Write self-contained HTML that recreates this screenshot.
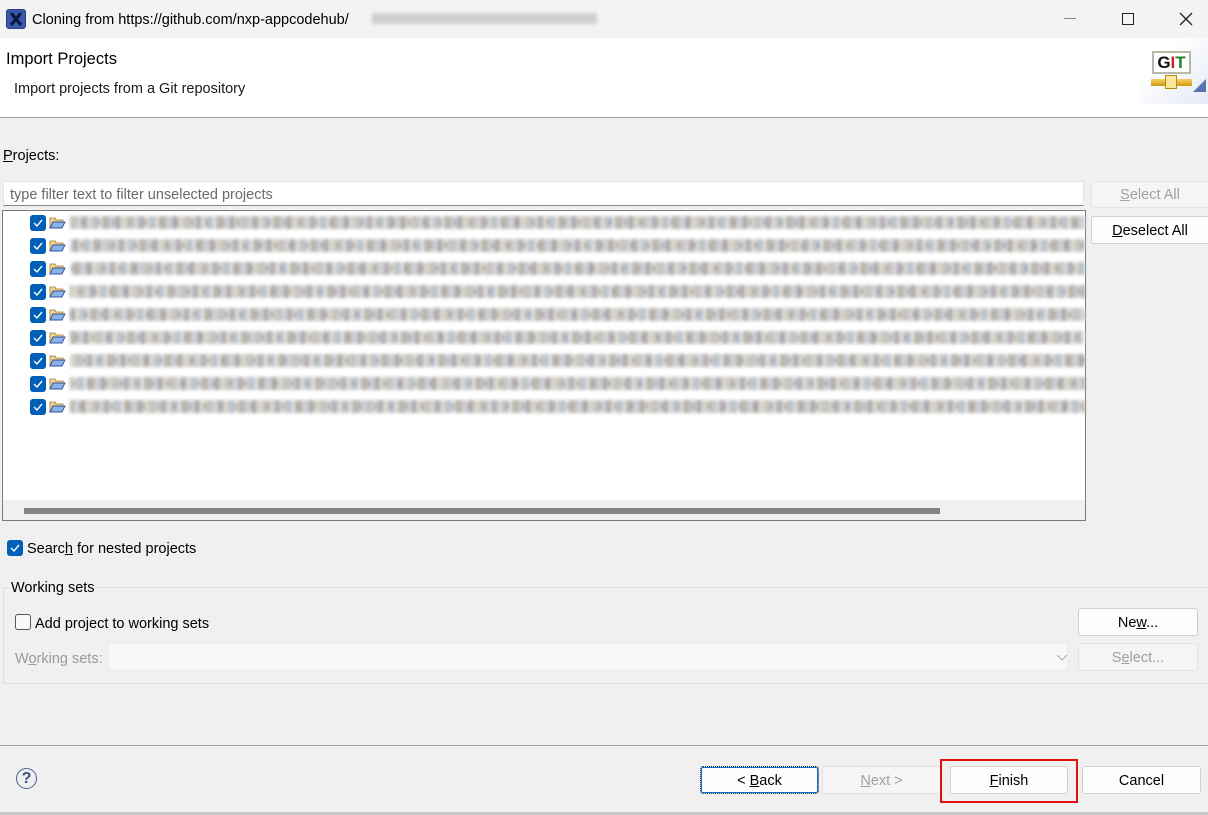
<!DOCTYPE html>
<html><head><meta charset="utf-8"><style>
*{box-sizing:border-box;margin:0;padding:0}
body{width:1208px;height:815px;overflow:hidden;background:#f0f0f0;font-family:"Liberation Sans",sans-serif;font-size:14.5px;color:#000;position:relative}
.a{position:absolute}
.btn{position:absolute;background:#fdfdfd;border:1px solid #d0d0d0;border-radius:3px;text-align:center;line-height:27px;font-size:14.5px}
.dis{color:#a0a0a0;background:#f5f5f5;border-color:#e3e3e3}
u{text-decoration:underline}
.cb{position:absolute;width:16px;height:16px;background:#005fb8;border-radius:3px}
.cb svg{position:absolute;left:2px;top:3px}
.row{position:absolute;left:30px;height:16px;width:1055px}
.blur{position:absolute;left:40px;top:1px;height:13px;width:1015px;filter:blur(1.6px);
background:repeating-linear-gradient(90deg,#c6c4c0 0 7px,#d4d4d6 7px 12px,#b0aeb4 12px 17px,#dcd9d2 17px 22px,#bcc4cc 22px 29px,#e6e6e6 29px 32px,#bab6ae 32px 39px,#cfcfd3 39px 46px,#a8a6a8 46px 50px,#d8d4cc 50px 57px)}
.blur2{position:absolute;left:40px;top:5px;height:5px;width:1015px;filter:blur(1px);background:repeating-linear-gradient(90deg,transparent 0 11px,#9e9ca0 11px 15px,transparent 15px 27px,#a8a49c 27px 31px);opacity:.5}
</style></head><body>
<div class="a" style="left:0;top:0;width:1208px;height:38px;background:#f3f3f3"></div>
<div class="a" style="left:6px;top:9px;width:20px;height:20px;background:#3a57a8;border-radius:3px;border:1px solid #2a3f80"><svg width="18" height="18" style="position:absolute;left:0;top:0"><path d="M4 3 L14 15 M14 3 L4 15" stroke="#0c1640" stroke-width="3"/></svg></div>
<div class="a" style="left:32px;top:12px;font-size:14.5px">Cloning from https://github.com/nxp-appcodehub/</div>
<div class="a" style="left:372px;top:13px;width:225px;height:11px;background:#cfcfcf;filter:blur(1.5px)"></div>
<div class="a" style="left:1064px;top:18px;width:12px;height:1px;background:#888"></div>
<div class="a" style="left:1122px;top:13px;width:12px;height:12px;border:1.5px solid #222"></div>
<svg class="a" style="left:1179px;top:12px" width="14" height="14"><path d="M1 1L13 13M13 1L1 13" stroke="#222" stroke-width="1.3"/></svg>
<div class="a" style="left:0;top:38px;width:1208px;height:80px;background:#fff;border-bottom:1px solid #a0a0a0"></div>
<div class="a" style="left:1140px;top:38px;width:68px;height:66px;background:linear-gradient(135deg,#fff 30%,#e4e9f5 100%)"></div>
<div class="a" style="left:6px;top:50px;font-size:16.5px">Import Projects</div>
<div class="a" style="left:14px;top:81px;font-size:14.5px;color:#1a1a1a">Import projects from a Git repository</div>
<div class="a" style="left:1152px;top:51px;width:39px;height:23px;background:#fff;border:2px solid #b8b8a8;font:bold 17px 'Liberation Sans',sans-serif;text-align:center;line-height:19px"><span style="color:#111">G</span><span style="color:#d02020">I</span><span style="color:#208020">T</span></div>
<div class="a" style="left:1151px;top:79px;width:41px;height:7px;background:linear-gradient(#f8d060,#d09a10)"></div>
<div class="a" style="left:1165px;top:75px;width:12px;height:14px;background:#fbe7a0;border:1px solid #b88a10"></div>
<div class="a" style="left:1193px;top:79px;width:0;height:0;border-left:13px solid transparent;border-bottom:13px solid #5873b0"></div>
<div class="a" style="left:3px;top:148px"><u>P</u>rojects:</div>
<div class="a" style="left:3px;top:181px;width:1081px;height:25px;background:#fff;border:1px solid #e3e3e3;border-bottom:1px solid #888;padding-left:6px;line-height:26px;color:#6a6a6a">type filter text to filter unselected projects</div>
<div class="btn dis" style="left:1091px;top:181px;width:118px;height:27px"><u>S</u>elect All</div>
<div class="btn" style="left:1091px;top:216px;width:118px;height:28px;line-height:29px"><u>D</u>eselect All</div>
<div class="a" style="left:2px;top:210px;width:1084px;height:311px;background:#fff;border:1px solid #7a7a7a"></div>
<div class="a" style="left:3px;top:500px;width:1082px;height:20px;background:#f0f0f0"></div>
<div class="a" style="left:24px;top:508px;width:916px;height:6px;background:#858585"></div>
<div id="rows"></div>
<script>
var h='';for(var i=0;i<9;i++){var y=215+i*23;h+='<div class="row" style="top:'+y+'px"><div class="cb" style="left:0;top:0"><svg width="12" height="10"><path d="M2 5 L5 8 L10 2" stroke="#fff" stroke-width="1.4" fill="none"/></svg></div><svg style="position:absolute;left:19px;top:1px" width="17" height="14"><path d="M1 2h5l1 2h7v2H4L1 12z" fill="#f3d58a" stroke="#9a7a30" stroke-width="0.8"/><path d="M1 12 L4 6 H16 L13 12Z" fill="#8ab4e8" stroke="#3050a0" stroke-width="0.9"/></svg><div class="blur" style="background-position:'+(i*37)+'px 0"></div><div class="blur2" style="background-position:'+(i*53)+'px 0"></div></div>';}
document.getElementById('rows').innerHTML=h;
</script>
<div class="cb" style="left:7px;top:540px"><svg width="12" height="10"><path d="M2 5 L5 8 L10 2" stroke="#fff" stroke-width="1.4" fill="none"/></svg></div>
<div class="a" style="left:27px;top:541px">Searc<u>h</u> for nested projects</div>
<div class="a" style="left:3px;top:587px;width:1210px;height:97px;border:1px solid #dcdcdc"></div>
<div class="a" style="left:9px;top:580px;background:#f0f0f0;padding:0 2px">Working sets</div>
<div class="a" style="left:15px;top:614px;width:16px;height:16px;border:1px solid #555;border-radius:3px;background:#f8f8f8"></div>
<div class="a" style="left:35px;top:616px">Add project to working sets</div>
<div class="btn" style="left:1078px;top:608px;width:120px;height:28px;line-height:29px">Ne<u>w</u>...</div>
<div class="a" style="left:15px;top:651px;color:#9a9a9a">W<u>o</u>rking sets:</div>
<div class="a" style="left:108px;top:643px;width:960px;height:28px;background:#f8f8f8;border:1px solid #ececec"></div>
<svg class="a" style="left:1056px;top:654px" width="12" height="8"><path d="M1 1L6 6L11 1" stroke="#aaa" fill="none"/></svg>
<div class="btn dis" style="left:1078px;top:643px;width:120px;height:28px;line-height:29px">S<u>e</u>lect...</div>
<div class="a" style="left:0;top:745px;width:1208px;height:1px;background:#a0a0a0"></div>
<div class="a" style="left:16px;top:768px;width:21px;height:21px;border:1.5px solid #4a6290;border-radius:50%;text-align:center;font:bold 16px/19px 'Liberation Sans',sans-serif;color:#3a5080">?</div>
<div class="btn" style="left:700px;top:766px;width:119px;height:28px;border:1px dotted #111;outline:1px solid #0a6ed0;outline-offset:-2px;line-height:29px">&lt; <u>B</u>ack</div>
<div class="btn dis" style="left:822px;top:766px;width:119px;height:28px;line-height:29px"><u>N</u>ext &gt;</div>
<div class="a" style="left:940px;top:759px;width:138px;height:44px;border:2px solid #e01010"></div>
<div class="btn" style="left:950px;top:766px;width:118px;height:28px;line-height:29px"><u>F</u>inish</div>
<div class="btn" style="left:1082px;top:766px;width:119px;height:28px;line-height:29px">Cancel</div>
<div class="a" style="left:0;top:812px;width:1208px;height:3px;background:#c8c8c8"></div>
</body></html>
